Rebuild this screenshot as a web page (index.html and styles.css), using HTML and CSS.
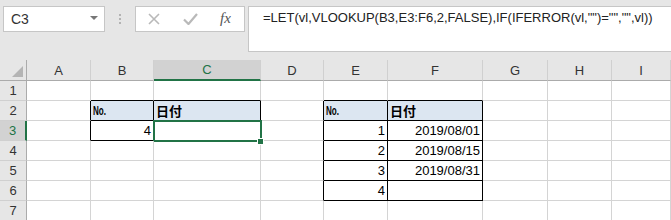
FILE: index.html
```html
<!DOCTYPE html>
<html lang="ja">
<head>
    <meta charset="UTF-8">
    <title>LET VLOOKUP</title>
    <link rel="stylesheet" href="styles.css">
</head>
<body>
    <div class="bar">
        <div class="namebox">
            <span>C3</span>
            <span class="arrow"></span>
        </div>
        <div class="dots"><i></i><i></i><i></i></div>
        <div class="fxbox">
            <svg class="icon-x" width="12" height="12" viewBox="0 0 12 12"><path d="M1 1L11 11M11 1L1 11" stroke="#b9b9b9" stroke-width="1.6" fill="none"/></svg>
            <svg class="icon-ok" width="15" height="12" viewBox="0 0 15 12"><path d="M1 6.5L5.5 11L14 1" stroke="#b9b9b9" stroke-width="2.2" fill="none"/></svg>
            <span class="fx">fx</span>
        </div>
        <div class="formula">=LET(vl,VLOOKUP(B3,E3:F6,2,FALSE),IF(IFERROR(vl,"")="","",vl))</div>
    </div>

    <div class="sheet">
        <!-- 列見出し -->
        <div class="corner"><span class="tri"></span></div>
        <div class="colhead">A</div>
        <div class="colhead">B</div>
        <div class="colhead sel">C</div>
        <div class="colhead">D</div>
        <div class="colhead">E</div>
        <div class="colhead">F</div>
        <div class="colhead">G</div>
        <div class="colhead">H</div>
        <div class="colhead">I</div>

        <!-- 1 -->
        <div class="rowhead">1</div>
        <div class="cell"></div>
        <div class="cell eb"></div>
        <div class="cell eb"></div>
        <div class="cell"></div>
        <div class="cell eb"></div>
        <div class="cell eb"></div>
        <div class="cell"></div>
        <div class="cell"></div>
        <div class="cell"></div>

        <!-- 2 -->
        <div class="rowhead">2</div>
        <div class="cell er"></div>
        <div class="cell er eb head"><span class="no">No.</span></div>
        <div class="cell er eb head">日付</div>
        <div class="cell er"></div>
        <div class="cell er eb head"><span class="no">No.</span></div>
        <div class="cell er eb head">日付</div>
        <div class="cell"></div>
        <div class="cell"></div>
        <div class="cell"></div>

        <!-- 3 -->
        <div class="rowhead sel">3</div>
        <div class="cell er"></div>
        <div class="cell er eb num">4</div>
        <div class="cell er eb active"><span class="handle"></span></div>
        <div class="cell er"></div>
        <div class="cell er eb num">1</div>
        <div class="cell er eb num">2019/08/01</div>
        <div class="cell"></div>
        <div class="cell"></div>
        <div class="cell"></div>

        <!-- 4 -->
        <div class="rowhead">4</div>
        <div class="cell"></div>
        <div class="cell"></div>
        <div class="cell"></div>
        <div class="cell er"></div>
        <div class="cell er eb num">2</div>
        <div class="cell er eb num">2019/08/15</div>
        <div class="cell"></div>
        <div class="cell"></div>
        <div class="cell"></div>

        <!-- 5 -->
        <div class="rowhead">5</div>
        <div class="cell"></div>
        <div class="cell"></div>
        <div class="cell"></div>
        <div class="cell er"></div>
        <div class="cell er eb num">3</div>
        <div class="cell er eb num">2019/08/31</div>
        <div class="cell"></div>
        <div class="cell"></div>
        <div class="cell"></div>

        <!-- 6 -->
        <div class="rowhead">6</div>
        <div class="cell"></div>
        <div class="cell"></div>
        <div class="cell"></div>
        <div class="cell er"></div>
        <div class="cell er eb num">4</div>
        <div class="cell er eb"></div>
        <div class="cell"></div>
        <div class="cell"></div>
        <div class="cell"></div>

        <!-- 7 -->
        <div class="rowhead">7</div>
        <div class="cell"></div>
        <div class="cell"></div>
        <div class="cell"></div>
        <div class="cell"></div>
        <div class="cell"></div>
        <div class="cell"></div>
        <div class="cell"></div>
        <div class="cell"></div>
        <div class="cell"></div>
    </div>
</body>
</html>
```

FILE: styles.css
```css
body {
    margin: 0;
    width: 671px;
    height: 220px;
    overflow: hidden;
    font-family: "Liberation Sans", "Noto Sans CJK JP", sans-serif;
    background-color: #fff;
}
.bar {
    display: flex;
    align-items: flex-start;
    height: 60px;
    box-sizing: border-box;
    padding: 6px 0 0 3px;
    background-color: #e6e6e6;
}
.namebox {
    display: flex;
    align-items: center;
    justify-content: space-between;
    width: 102px;
    height: 26px;
    box-sizing: border-box;
    padding: 0 6px 0 7px;
    background-color: #fff;
    border: 1px solid #c6c6c6;
    font-size: 14px;
    color: #333;
}
.arrow {
    width: 0;
    height: 0;
    border-left: 4px solid transparent;
    border-right: 4px solid transparent;
    border-top: 4px solid #777;
    margin-top: -3px;
}
.dots {
    width: 30px;
    height: 26px;
    display: flex;
    flex-direction: column;
    align-items: center;
    justify-content: center;
    gap: 2px;
}
.dots i {
    width: 2px;
    height: 2px;
    background-color: #b3b3b3;
}
.fxbox {
    display: flex;
    align-items: center;
    width: 110px;
    height: 26px;
    box-sizing: border-box;
    padding-left: 12px;
    background-color: #fff;
    border: 1px solid #c6c6c6;
}
.icon-x {
    margin-right: 23px;
}
.icon-ok {
    margin-right: 22px;
}
.fx {
    font-family: "Liberation Serif", serif;
    font-style: italic;
    font-size: 15px;
    color: #555;
    margin-top: -2px;
}
.formula {
    flex: 1;
    margin-left: 3px;
    margin-right: -4px;
    height: 46px;
    box-sizing: border-box;
    padding: 3px 0 0 14px;
    background-color: #fff;
    border: 1px solid #c6c6c6;
    font-size: 13px;
    color: #222;
}
.sheet {
    display: grid;
    grid-template-columns: 27px 64px 63px 107px 63px 64px 95px 65px 64px 1fr;
    grid-template-rows: 21px repeat(7, 20px);
}
.corner {
    position: relative;
    background-color: #e6e6e6;
    border-right: 1px solid #ababab;
    border-bottom: 1px solid #ababab;
}
.tri {
    position: absolute;
    right: 3px;
    bottom: 3px;
    width: 0;
    height: 0;
    border-left: 11px solid transparent;
    border-bottom: 11px solid #b4b4b4;
}
.colhead {
    display: flex;
    align-items: center;
    justify-content: center;
    background-color: #e6e6e6;
    border-right: 1px solid #d0d0d0;
    border-bottom: 1px solid #ababab;
    font-size: 13px;
    color: #333;
}
.colhead.sel {
    background-color: #d2d2d2;
    color: #217346;
    border-bottom: 2px solid #217346;
}
.rowhead {
    display: flex;
    align-items: center;
    justify-content: center;
    background-color: #e6e6e6;
    border-right: 1px solid #ababab;
    border-bottom: 1px solid #d0d0d0;
    font-size: 13px;
    color: #333;
}
.rowhead.sel {
    background-color: #d2d2d2;
    color: #217346;
    border-right: 2px solid #217346;
}
.cell {
    position: relative;
    display: flex;
    align-items: center;
    padding: 0 2px;
    border-right: 1px solid #d4d4d4;
    border-bottom: 1px solid #d4d4d4;
    font-size: 13px;
    color: #000;
    white-space: nowrap;
}
.er {
    border-right-color: #000;
}
.eb {
    border-bottom-color: #000;
}
.num {
    justify-content: flex-end;
}
.head {
    background-color: #dce6f1;
    font-weight: bold;
}
.no {
    display: inline-block;
    transform: scaleX(0.62);
    transform-origin: left center;
    font-size: 13px;
}
.active::after {
    content: '';
    position: absolute;
    left: -1px;
    top: -1px;
    width: 109px;
    height: 22px;
    box-sizing: border-box;
    border: 2px solid #217346;
}
.handle {
    position: absolute;
    left: 103px;
    top: 17px;
    width: 5px;
    height: 5px;
    background-color: #217346;
    border: 1px solid #fff;
    z-index: 1;
}
```
